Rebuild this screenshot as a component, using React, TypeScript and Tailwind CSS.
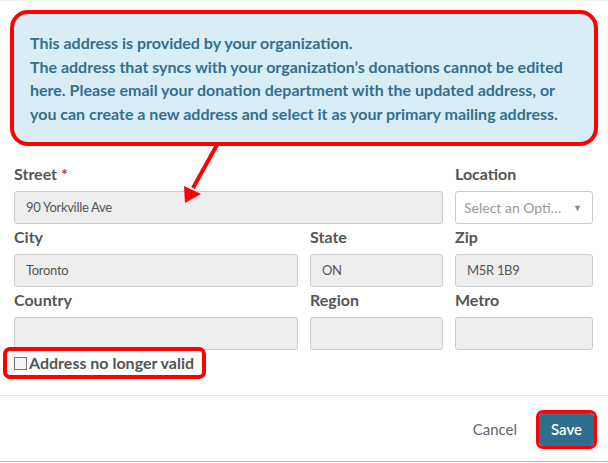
import React from "react";

const label = "mt-[3px] mb-[7px] h-5 text-[16px] font-bold leading-5 text-[#555]";
const input =
  "h-[33px] w-full rounded-[3px] border border-[#ccc] bg-[#eee] px-[11px] text-[13px] tracking-[-0.3px] leading-[31px] text-[#555]";

function Field({ name, value, required }: { name: string; value?: string; required?: boolean }) {
  return (
    <div>
      <div className={label}>
        {name}
        {required && <span className="ml-1 text-[#a94442]">*</span>}
      </div>
      <div className={input}>{value}</div>
    </div>
  );
}

export default function App() {
  return (
    <div
      className="relative flex h-[463px] w-[608px] flex-col overflow-hidden bg-white"
      style={{ fontFamily: "Lato, 'Liberation Sans', sans-serif" }}
    >
      <div className="h-px w-full bg-[#eef2ea]" />

      {/* info callout */}
      <div className="ml-[10px] mt-[9px] h-[136px] w-[588px] rounded-[18px] border-4 border-[#f00] bg-[#d9edf7] pl-4 pt-[17px]">
        <p className="text-[16px] font-bold leading-[23.5px] text-[#31708f]">
          This address is provided by your organization.
          <br />
          The address that syncs with your organization’s donations cannot be edited
          <br />
          here. Please email your donation department with the updated address, or
          <br />
          you can create a new address and select it as your primary mailing address.
        </p>
      </div>

      {/* form */}
      <div className="ml-[14px] mt-[15px] grid grid-cols-[284px_133px_138px] gap-x-3">
        <div className="col-span-2">
          <Field name="Street" value="90 Yorkville Ave" required />
        </div>
        <div>
          <div className={label}>Location</div>
          <div className="flex h-[33px] items-center justify-between rounded-[3px] border border-[#ccc] bg-white pl-2 pr-[10px] text-[14px] text-[#999]">
            <span>Select an Opti…</span>
            <span className="text-[9px] text-[#888]">▼</span>
          </div>
        </div>
        <Field name="City" value="Toronto" />
        <Field name="State" value="ON" />
        <Field name="Zip" value="M5R 1B9" />
        <Field name="Country" />
        <Field name="Region" />
        <Field name="Metro" />
      </div>

      <div className="ml-[3px] -mt-[3px] flex h-[32px] w-[203px] items-center gap-[2px] rounded-[7px] border-4 border-[#f00] pl-[7px]">
        <span className="h-[13px] w-[13px] shrink-0 border border-[#767676] bg-[#f4f4f4]" />
        <span className="whitespace-nowrap text-[16px] font-bold text-[#555]">Address no longer valid</span>
      </div>

      <div className="mt-4 h-px w-full bg-[#e5e5e5]" />

      <div className="mr-[11px] mt-[14px] flex items-center justify-end gap-[19px]">
        <span className="text-[15px] text-[#666]">Cancel</span>
        <div className="rounded-[7px] border-[3px] border-[#f00]">
          <button className="h-[33px] w-[55px] rounded-[4px] bg-[#2e6e8e] text-[15px] font-semibold text-white">
            Save
          </button>
        </div>
      </div>

      <div className="mt-auto mb-px h-px w-full bg-[#bbb]" />

      {/* annotation arrow */}
      <svg className="absolute left-0 top-0" width="608" height="463">
        <line x1="218" y1="143" x2="193" y2="188" stroke="#f00" strokeWidth="4" />
        <polygon points="185,203 184,186 201,194" fill="#f00" />
      </svg>
    </div>
  );
}
